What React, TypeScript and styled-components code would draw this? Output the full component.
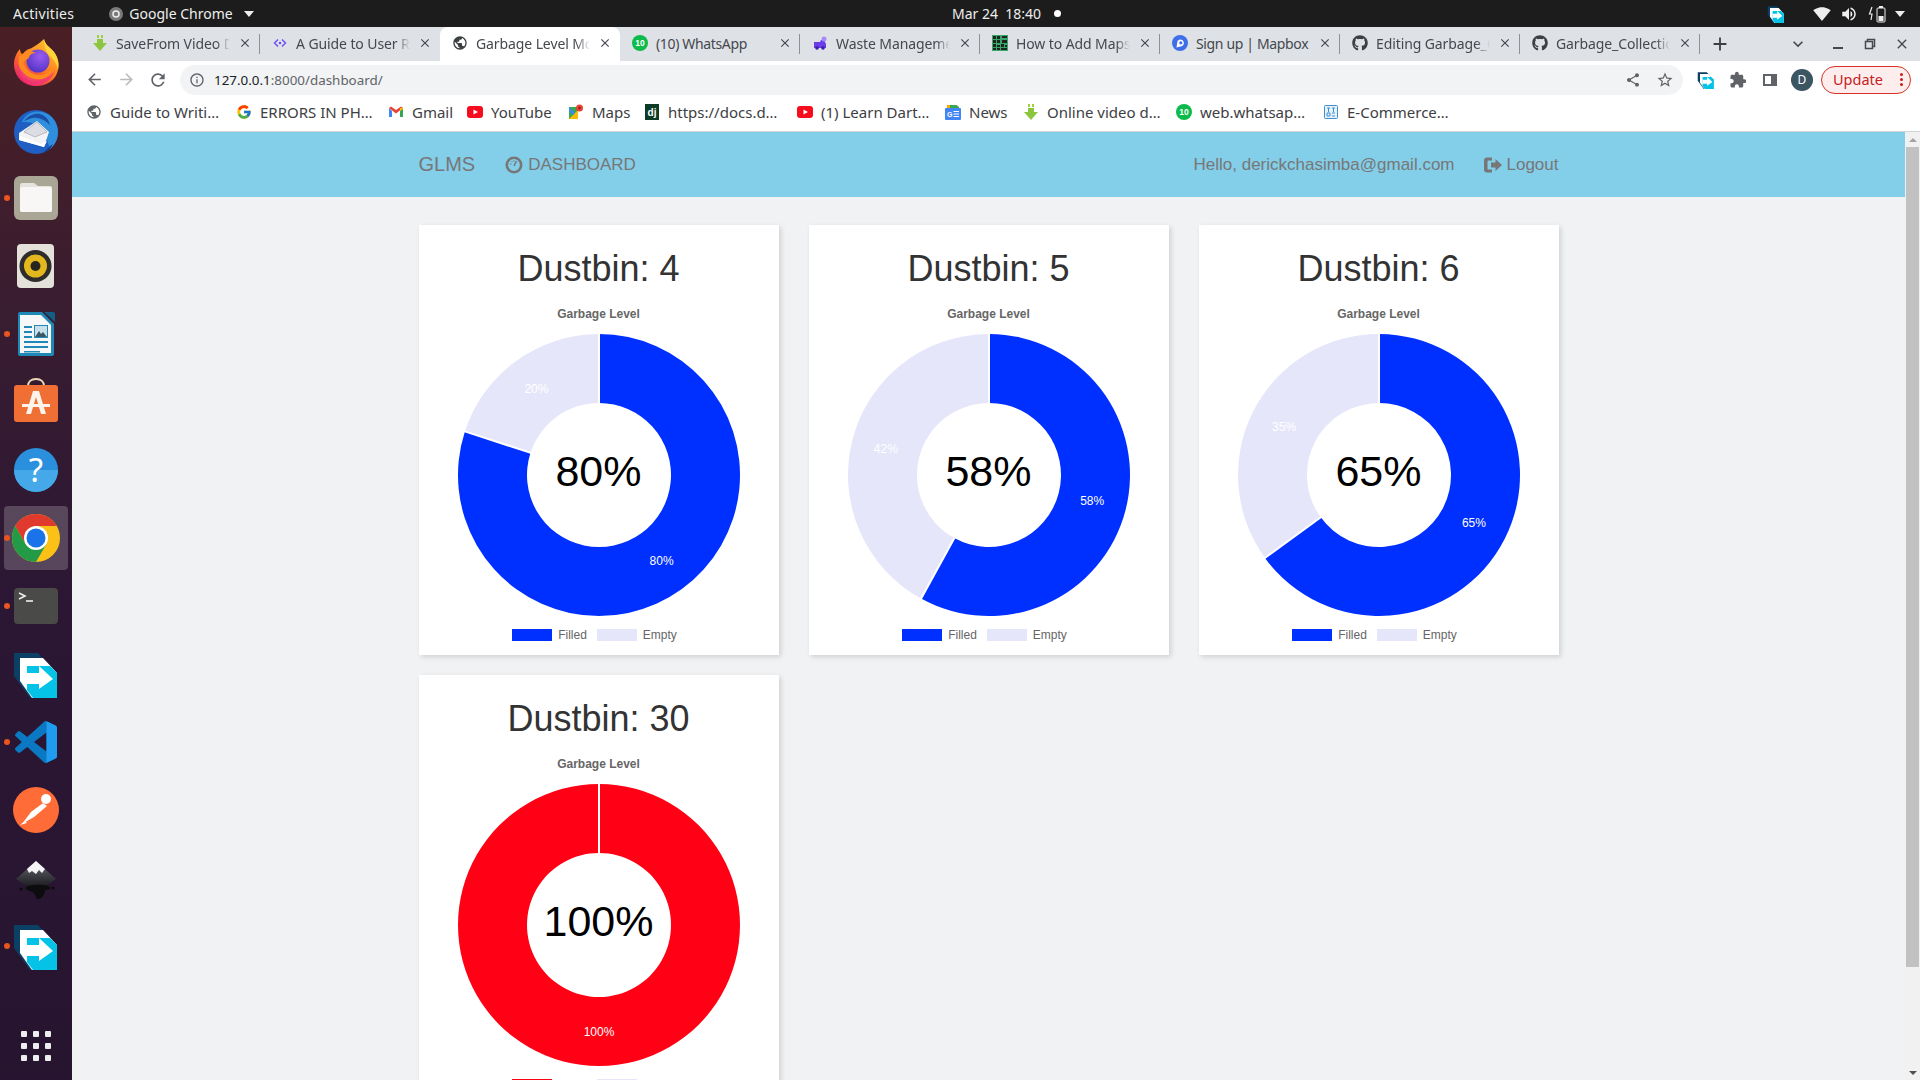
import React, { ReactNode } from 'react'
import styled, { createGlobalStyle } from 'styled-components'
import { FaGithub } from 'react-icons/fa'
import { FcGoogle } from 'react-icons/fc'
import {
  MdAdd,
  MdArrowBack,
  MdArrowForward,
  MdClose,
  MdExtension,
  MdInfoOutline,
  MdKeyboardArrowDown,
  MdPublic,
  MdRefresh,
  MdShare,
  MdSignalWifi4Bar,
  MdStarBorder,
  MdVolumeUp,
} from 'react-icons/md'

const UI_FONT = `"Noto Sans", "Open Sans", sans-serif`
const PAGE_FONT = `"Liberation Sans", Arial, sans-serif`

const GlobalStyle = createGlobalStyle`
  html, body {
    margin: 0;
    height: 100%;
    overflow: hidden;
    background: #1c1c1c;
  }
  #root { height: 100%; }
  * { box-sizing: border-box; }
`

/* ---------- desktop shell ---------- */

const Desktop = styled.div`
  display: flex;
  flex-direction: column;
  width: 1920px;
  height: 1080px;
  overflow: hidden;
`

const TopBar = styled.header`
  display: flex;
  align-items: center;
  flex: none;
  height: 27px;
  background: #1c1c1c;
  color: #eeeeec;
  font-family: ${UI_FONT};
  font-size: 14px;
`

const TopLeft = styled.div`
  display: flex;
  align-items: center;
  flex: none;
  width: 952px;
  padding-left: 13px;
`

const ActivitiesLabel = styled.span`
  letter-spacing: 0.3px;
`

const AppMenu = styled.div`
  display: flex;
  align-items: center;
  margin-left: 35px;
  gap: 6px;
`

const Caret = styled.span`
  width: 0;
  height: 0;
  margin-left: 5px;
  border-left: 5px solid transparent;
  border-right: 5px solid transparent;
  border-top: 6px solid #eeeeec;
`

const TrayCaret = styled(Caret)`
  margin-left: -3px;
`

const Clock = styled.div`
  white-space: pre;
`

const RecordDot = styled.span`
  width: 7px;
  height: 7px;
  margin-left: 13px;
  border-radius: 50%;
  background: #fff;
`

const TopRight = styled.div`
  display: flex;
  align-items: center;
  flex: 1;
  justify-content: flex-end;
  padding-right: 15px;
  gap: 9px;
`

const TrayGap = styled.span`
  width: 10px;
`

const Workspace = styled.div`
  display: flex;
  flex: 1;
  min-height: 0;
`

const Dock = styled.aside`
  display: flex;
  flex-direction: column;
  flex: none;
  width: 72px;
  padding-top: 1px;
  background: linear-gradient(180deg, #4a1f24 0%, #3a1d30 25%, #2b1734 55%, #27142f 100%);
`

const DockItem = styled.div<{ $active?: boolean; $running?: boolean }>`
  position: relative;
  display: flex;
  align-items: center;
  justify-content: center;
  flex: none;
  height: 68px;

  ${(p) =>
    p.$active &&
    `
    &::before {
      content: '';
      position: absolute;
      inset: 2px 4px;
      border-radius: 4px;
      background: rgba(255, 255, 255, 0.2);
    }
  `}

  ${(p) =>
    p.$running &&
    `
    &::after {
      content: '';
      position: absolute;
      left: 4px;
      top: 31px;
      width: 6px;
      height: 6px;
      border-radius: 50%;
      background: #e95420;
    }
  `}

  svg { position: relative; }
`

const AppGrid = styled.div`
  display: grid;
  grid-template-columns: repeat(3, 6px);
  gap: 6px;
  justify-content: center;
  margin-top: auto;
  margin-bottom: 19px;

  span {
    width: 6px;
    height: 6px;
    border-radius: 1px;
    background: #eeeeee;
  }
`

const Browser = styled.main`
  display: flex;
  flex-direction: column;
  flex: 1;
  min-width: 0;
`

/* ---------- chrome tabs ---------- */

const TabStrip = styled.div`
  display: flex;
  align-items: stretch;
  flex: none;
  height: 34px;
  padding-left: 8px;
  background: #dee1e6;
  font-family: ${UI_FONT};
  font-size: 14px;
  color: #45484d;
`

const Tab = styled.div<{ $active?: boolean; $divider?: boolean }>`
  position: relative;
  display: flex;
  align-items: center;
  flex: none;
  width: 180px;
  padding: 0 8px 2px 12px;
  gap: 8px;
  border-radius: 8px 8px 0 0;
  background: ${(p) => (p.$active ? '#fff' : 'transparent')};

  ${(p) =>
    p.$divider &&
    `
    &::after {
      content: '';
      position: absolute;
      right: 0;
      top: 7px;
      bottom: 7px;
      width: 1px;
      background: #8f9194;
    }
  `}
`

const TabIcon = styled.span`
  display: flex;
  flex: none;
  width: 16px;
  height: 16px;
  color: #3c4043;
`

const TabTitle = styled.span<{ $fits?: boolean }>`
  flex: 1;
  min-width: 0;
  overflow: hidden;
  white-space: nowrap;
  letter-spacing: ${(p) => (p.$fits ? '-0.35px' : '-0.1px')};
  ${(p) =>
    !p.$fits &&
    `
    -webkit-mask-image: linear-gradient(90deg, #000 88%, transparent 100%);
    mask-image: linear-gradient(90deg, #000 88%, transparent 100%);
  `}
`

const NewTab = styled.div`
  display: flex;
  align-items: center;
  margin-left: 9px;
  color: #3c4043;
`

const WindowControls = styled.div`
  display: flex;
  align-items: center;
  margin-left: auto;
  padding-right: 2px;
  color: #45484d;
`

const WindowButton = styled.div<{ $width?: number }>`
  display: flex;
  align-items: center;
  justify-content: center;
  width: ${(p) => p.$width ?? 32}px;
  height: 100%;
`

/* ---------- chrome toolbar ---------- */

const Toolbar = styled.div`
  display: flex;
  align-items: center;
  flex: none;
  height: 37px;
  padding: 0 9px 0 6px;
  background: #fff;
  color: #5f6368;
`

const ToolButton = styled.div`
  display: flex;
  align-items: center;
  justify-content: center;
  flex: none;
  width: 32px;
`

const Omnibox = styled.div`
  display: flex;
  align-items: center;
  flex: 1;
  height: 30px;
  margin: 0 7px 0 6px;
  padding-left: 9px;
  border-radius: 15px;
  background: #f1f3f4;
  font-family: ${UI_FONT};
  font-size: 13.4px;
`

const UrlText = styled.span`
  margin-left: 9px;
  color: #5f6368;

  b {
    font-weight: 400;
    color: #202124;
  }
`

const OmniActions = styled.div`
  display: flex;
  margin-left: auto;
  padding-right: 2px;
`

const Avatar = styled.span`
  display: flex;
  align-items: center;
  justify-content: center;
  width: 22px;
  height: 22px;
  border-radius: 50%;
  background: #3c5563;
  color: #fff;
  font-family: ${UI_FONT};
  font-size: 12px;
`

const UpdatePill = styled.div`
  display: flex;
  align-items: center;
  justify-content: space-between;
  width: 90px;
  height: 28px;
  margin-left: 3px;
  padding: 0 7px 1px 11px;
  border: 1px solid #d93025;
  border-radius: 14px;
  background: #fdeeed;
  color: #c5221f;
  font-family: ${UI_FONT};
  font-size: 14.5px;
`

const PillDots = styled.span`
  display: flex;
  flex-direction: column;
  gap: 2px;

  i {
    width: 3px;
    height: 3px;
    border-radius: 50%;
    background: #c5221f;
  }
`

/* ---------- bookmarks ---------- */

const BookmarkBar = styled.div`
  display: flex;
  align-items: center;
  flex: none;
  height: 34px;
  padding: 0 0 6px 14px;
  background: #fff;
  border-bottom: 1px solid #d0d3d8;
  font-family: ${UI_FONT};
  font-size: 15px;
  color: #3c4043;
`

const Bookmark = styled.div<{ $width: number }>`
  display: flex;
  align-items: center;
  flex: none;
  width: ${(p) => p.$width}px;
  gap: 8px;
  white-space: nowrap;
`

/* ---------- dashboard page ---------- */

const Viewport = styled.div`
  display: flex;
  flex: 1;
  min-height: 0;
`

const Page = styled.div`
  flex: 1;
  min-width: 0;
  overflow: hidden;
  background: #f1f2f4;
  font-family: ${PAGE_FONT};
`

const Navbar = styled.nav`
  height: 65px;
  background: #83cee9;
  color: #777;
`

const NavInner = styled.div`
  display: flex;
  align-items: center;
  width: 1140px;
  height: 100%;
  margin: 0 auto;
`

const Brand = styled.span`
  font-size: 20px;
`

const NavLink = styled.span`
  display: flex;
  align-items: center;
  gap: 5px;
  margin-left: 30px;
  font-size: 17px;
`

const NavRight = styled.div`
  display: flex;
  align-items: center;
  margin-left: auto;
  gap: 29px;
  font-size: 17px;
`

const LogoutLink = styled.span`
  display: flex;
  align-items: center;
  gap: 5px;
  font-size: 17px;
`

const CardGrid = styled.div`
  display: grid;
  grid-template-columns: repeat(3, 360px);
  gap: 20px 30px;
  width: 1140px;
  margin: 28px auto 0;
`

const Card = styled.section`
  height: 430px;
  padding-top: 24px;
  background: #fff;
  box-shadow: 2px 2px 5px rgba(0, 0, 0, 0.14);
  text-align: center;
`

const CardTitle = styled.h2`
  margin: 0;
  font-size: 36px;
  font-weight: 400;
  line-height: 40px;
  color: #333;
`

const ChartCaption = styled.div`
  margin-top: 18px;
  font-size: 12px;
  font-weight: 700;
  line-height: 14px;
  color: #666;
`

const DonutWrap = styled.div`
  position: relative;
  width: 282px;
  height: 282px;
  margin: 13px auto 0;

  svg { display: block; }
`

const CenterValue = styled.div`
  position: absolute;
  left: 0;
  right: 0;
  top: 115px;
  font-size: 43px;
  line-height: 44px;
  color: #000;
`

const Legend = styled.div`
  display: flex;
  justify-content: center;
  gap: 10px;
  margin-top: 13px;
  padding-right: 8px;
  font-size: 12px;
  line-height: 12px;
  color: #666;
`

const LegendItem = styled.span`
  display: flex;
  align-items: center;
  gap: 6px;
`

const Swatch = styled.i<{ $color: string }>`
  width: 40px;
  height: 12px;
  background: ${(p) => p.$color};
`

const Scrollbar = styled.div`
  display: flex;
  flex-direction: column;
  align-items: center;
  flex: none;
  width: 15px;
  background: #f1f1f1;
`

const ScrollArrow = styled.span<{ $down?: boolean }>`
  width: 0;
  height: 0;
  margin: 6px 0 5px;
  border-left: 4px solid transparent;
  border-right: 4px solid transparent;
  ${(p) => (p.$down ? 'border-top: 4px solid #505050;' : 'border-bottom: 4px solid #a3a3a3;')}
`

const ScrollThumb = styled.div`
  width: 13px;
  height: 820px;
  background: #c1c1c1;
`

const ScrollTrack = styled.div`
  flex: 1;
`

/* ---------- donut chart ---------- */

const SIZE = 282
const OUTER = 141
const INNER = 72
const EMPTY = '#e6e6fa'

const polar = (r: number, turn: number) => {
  const a = turn * 2 * Math.PI
  return [SIZE / 2 + r * Math.sin(a), SIZE / 2 - r * Math.cos(a)]
}

const slicePath = (from: number, to: number) => {
  const end = Math.min(to, from + 0.99999)
  const large = end - from > 0.5 ? 1 : 0
  const [x1, y1] = polar(OUTER, from)
  const [x2, y2] = polar(OUTER, end)
  const [x3, y3] = polar(INNER, end)
  const [x4, y4] = polar(INNER, from)
  return `M${x1} ${y1}A${OUTER} ${OUTER} 0 ${large} 1 ${x2} ${y2}L${x3} ${y3}A${INNER} ${INNER} 0 ${large} 0 ${x4} ${y4}Z`
}

const Spoke = ({ turn }: { turn: number }) => {
  const [x1, y1] = polar(INNER - 1, turn)
  const [x2, y2] = polar(OUTER + 1, turn)
  return <line x1={x1} y1={y1} x2={x2} y2={y2} stroke="#fff" strokeWidth="2" />
}

const Donut = ({ value, color }: { value: number; color: string }) => {
  const split = value / 100
  const mid = (OUTER + INNER) / 2
  const [fx, fy] = polar(mid, split / 2)
  const [ex, ey] = polar(mid, split + (1 - split) / 2)
  return (
    <svg width={SIZE} height={SIZE} viewBox={`0 0 ${SIZE} ${SIZE}`}>
      <path d={slicePath(0, split)} fill={color} />
      {value < 100 && <path d={slicePath(split, 1)} fill={EMPTY} />}
      <Spoke turn={0} />
      {value < 100 && <Spoke turn={split} />}
      <text x={fx} y={fy} fill="#fff" fontSize="12" textAnchor="middle" dominantBaseline="central">
        {value}%
      </text>
      {value < 100 && (
        <text x={ex} y={ey} fill="#fff" fontSize="12" textAnchor="middle" dominantBaseline="central">
          {100 - value}%
        </text>
      )}
    </svg>
  )
}

const bins = [
  { id: 4, level: 80, color: '#0030ff' },
  { id: 5, level: 58, color: '#0030ff' },
  { id: 6, level: 65, color: '#0030ff' },
  { id: 30, level: 100, color: '#ff0014' },
]

/* ---------- small icons ---------- */

const DownloadFav = () => (
  <svg width="16" height="16" viewBox="0 0 16 16">
    <path d="M5 0h2v3H5zM9 0h2v3H9z" fill="#a4cf3c" />
    <path d="M5 4h6v4h4l-7 8-7-8h4z" fill="#8cc63f" />
  </svg>
)

const CodeFav = () => (
  <svg width="16" height="16" viewBox="0 0 16 16" fill="none" stroke="#6a4df4" strokeWidth="1.4">
    <path d="M6 4.500 2.500 8 6 11.500M10 4.500 13.500 8 10 11.500" />
    <circle cx="8" cy="8" r=".6" fill="#6a4df4" />
  </svg>
)

const WhatsAppBadge = () => (
  <svg width="16" height="16" viewBox="0 0 16 16">
    <circle cx="8" cy="8" r="8" fill="#0dba4c" />
    <text x="8" y="11" fontSize="8.500" fontFamily={PAGE_FONT} fontWeight="700" fill="#fff" textAnchor="middle">
      10
    </text>
  </svg>
)

const TruckFav = () => (
  <svg width="16" height="16" viewBox="0 0 16 16">
    <path d="M2 7h6l1-2h3l2 4v4H2z" fill="#6a3de8" />
    <circle cx="12" cy="4" r="2.500" fill="#a78bfa" />
    <circle cx="5" cy="13" r="1.800" fill="#3b1fa8" />
    <circle cx="11" cy="13" r="1.800" fill="#3b1fa8" />
  </svg>
)

const GridFav = () => (
  <svg width="16" height="16" viewBox="0 0 16 16">
    <rect width="16" height="16" fill="#37a86b" />
    <path d="M1 1h3v3H1zM5 1h3v3H5zM10 1h5v2h-5zM1 5h3v3H1zM5 5h3v3H5zM10 5h5v3h-5zM1 9h3v3H1zM5 10h3v2H5zM9 9h3v3H9zM13 10h2v2h-2zM1 13h3v2H1zM5 13h3v2H5zM9 13h6v2H9z" fill="#222" />
  </svg>
)

const MapboxFav = () => (
  <svg width="16" height="16" viewBox="0 0 16 16">
    <circle cx="8" cy="8" r="8" fill="#3f6fe8" />
    <path d="M4.500 12.500 5.500 6a3.500 3.500 0 1 1 3 5.500z" fill="#fff" />
    <circle cx="8.800" cy="7.800" r="1.600" fill="#3f6fe8" />
  </svg>
)

const YouTubeFav = () => (
  <svg width="16" height="16" viewBox="0 0 16 16">
    <rect y="2" width="16" height="12" rx="3" fill="#f50d1e" />
    <path d="M6.500 5.500 11 8l-4.500 2.500z" fill="#fff" />
  </svg>
)

const GmailFav = () => (
  <svg width="16" height="16" viewBox="0 0 16 16">
    <path d="M1 4v9h3V7z" fill="#4285f4" />
    <path d="M15 4v9h-3V7z" fill="#34a853" />
    <path d="M1 4l7 5.500L15 4 13 2.500 8 6 3 2.500z" fill="#ea4335" />
    <path d="M12 4v3l3-2V3.500z" fill="#fbbc04" />
  </svg>
)

const MapsFav = () => (
  <svg width="16" height="16" viewBox="0 0 16 16">
    <path d="M1 3h9v12H1z" fill="#34a853" />
    <path d="M1 15 10 6v9z" fill="#fbbc04" />
    <path d="M1 3l6 6-2 2-4-4z" fill="#4285f4" />
    <circle cx="11.500" cy="4" r="3.500" fill="#ea4335" />
    <circle cx="11.500" cy="4" r="1.200" fill="#8c1d18" />
  </svg>
)

const DjangoFav = () => (
  <svg width="16" height="16" viewBox="0 0 16 16">
    <rect x="1" width="14" height="16" fill="#0c3c26" />
    <text x="8" y="12" fontSize="10" fontFamily={PAGE_FONT} fontWeight="700" fill="#fff" textAnchor="middle">
      dj
    </text>
  </svg>
)

const NewsFav = () => (
  <svg width="16" height="16" viewBox="0 0 16 16">
    <path d="M2 1h10l2 3H2z" fill="#f9ab00" />
    <path d="M5 1h6l3 2v2H5z" fill="#34a853" />
    <rect y="4" width="16" height="12" rx="1" fill="#4285f4" />
    <text x="2" y="13" fontSize="7" fontFamily={PAGE_FONT} fontWeight="700" fill="#fff">
      G
    </text>
    <path d="M8.500 7.500H14M8.500 10H14M8.500 12.500H14" stroke="#fff" />
  </svg>
)

const CommerceFav = () => (
  <svg width="16" height="16" viewBox="0 0 16 16" fill="none" stroke="#3f8fd0">
    <rect x="1.500" y="1.500" width="13" height="13" rx="1" fill="#e8f2fb" />
    <path d="M4 4h3M9 4h3M5.500 4v4M10.500 4v4M4 9h3v3H4zM9 9h3M9 12h3" />
  </svg>
)

const SidePanelIcon = () => (
  <svg width="16" height="16" viewBox="0 0 16 16">
    <path d="M1 2h14v12H1z" fill="#5f6368" />
    <path d="M3 4h6v8H3z" fill="#fff" />
  </svg>
)

const TransferShape = () => (
  <>
    <path d="M2 3h24l19 20v25H18L2 26z" fill="#0b3f63" />
    <path d="M8 8h23l14 15v25H20L8 31z" fill="#fff" />
    <path d="M15 16h23l7 7v25H21l-6-8z" fill="#05c3e6" />
    <path d="M15 23h12v-7l14 13-14 10v-5H15z" fill="#fff" />
  </>
)

const TransferMini = () => (
  <svg width="18" height="18" viewBox="0 0 48 48">
    <TransferShape />
  </svg>
)

const DashboardGlyph = () => (
  <svg width="18" height="18" viewBox="0 0 18 18">
    <circle cx="9" cy="9" r="7.200" fill="none" stroke="#777" strokeWidth="2.600" />
    <path d="M9 10 11.500 5" stroke="#777" strokeWidth="1.500" />
    <path d="M5 8h1.500M6.500 5.500h1M9 4.500v1" stroke="#777" strokeWidth="1.200" />
  </svg>
)

const LogoutGlyph = () => (
  <svg width="18" height="18" viewBox="0 0 18 18" fill="#777">
    <path d="M0 4.500A3 3 0 0 1 3 1.500h5v3H4.500a1 1 0 0 0-1 1v7a1 1 0 0 0 1 1H8v3H3a3 3 0 0 1-3-3z" />
    <path d="M7 6.500h4.500V3L18 9l-6.500 6v-3.500H7z" />
  </svg>
)

const BatteryIcon = () => (
  <svg width="22" height="18" viewBox="0 0 22 18" fill="none">
    <path d="M5 2 2.500 9H5l-1 6" stroke="#eee" strokeWidth="1.200" />
    <rect x="10" y="3" width="8" height="14" rx="1" stroke="#eee" />
    <rect x="12" y="1" width="4" height="2" fill="#eee" />
    <rect x="11.500" y="11" width="5" height="5" fill="#eee" />
  </svg>
)

/* ---------- dock icons (48 x 48) ---------- */

const Icon48 = ({ children }: { children: ReactNode }) => (
  <svg width="48" height="48" viewBox="0 0 48 48">
    {children}
  </svg>
)

const FirefoxIcon = () => (
  <Icon48>
    <defs>
      <linearGradient id="ffBody" x1="0.800" y1="0.100" x2="0.200" y2="1">
        <stop offset="0" stopColor="#ffbd2e" />
        <stop offset=".5" stopColor="#ff7a1f" />
        <stop offset="1" stopColor="#e6156f" />
      </linearGradient>
      <radialGradient id="ffCore" cx=".6" cy=".3" r=".8">
        <stop offset="0" stopColor="#9a5cf0" />
        <stop offset="1" stopColor="#4a2fc0" />
      </radialGradient>
    </defs>
    <path d="M32 1c1 6 6 8 10 13 5 7 5 13 4 18-2 10-11 16-22 16C11 48 2 38 2 26 2 20 5 14 8 11c0 3 1 4 3 6 1-4 5-6 9-7-1 0 6-3 12-9z" fill="url(#ffBody)" />
    <path d="M32 1c1 6 6 8 10 13 5 7 5 13 4 18-1-7-5-11-9-15-3-3-5-9-5-16z" fill="#ffd43a" />
    <circle cx="26" cy="23" r="11.500" fill="url(#ffCore)" />
    <path d="M7 19c4-5 10-7 17-4-5 0-7 3-7 5l-5 3c0 8 8 15 17 14 5-1 10-4 12-8-2 9-11 15-20 14C12 42 5 33 7 19z" fill="#ff8a1f" />
    <path d="M6 26c4 11 14 17 24 15 6-1 11-5 13-9-3 10-11 15-20 15C13 47 5 38 6 26z" fill="#f0347a" opacity=".8" />
  </Icon48>
)

const ThunderbirdIcon = () => (
  <Icon48>
    <g transform="translate(0 1)">
      <circle cx="24" cy="25" r="22" fill="#1f5fc4" />
      <path d="M10 15c3-8 12-12 20-10 9 2 16 10 16 20 0 7-3 13-8 17-3-9-5-20-15-25-5-2-9-2-13-2z" fill="#2f8fdc" />
      <path d="M12 14c5-6 11-8 16-7 6 2 9 6 10 11-5-5-11-8-18-7z" fill="#1a4fa8" />
      <path d="M7 26 25 14l12 11-5 15-25-7z" fill="#f3f3f5" />
      <path d="M12 25 25 15l10 10-12 5z" fill="#dcdde2" stroke="#9a9ca4" strokeWidth=".6" />
      <path d="M7 33l25 7 3-6-6 3-21-8z" fill="#fff" />
      <path d="M31 46c3-1 8-4 10-9l-3 2z" fill="#123e8a" />
    </g>
  </Icon48>
)

const FilesIcon = () => (
  <Icon48>
    <rect x="2" y="2" width="44" height="44" rx="6" fill="#aaa695" />
    <path d="M8 11a2 2 0 0 1 2-2h12l4 3h12a2 2 0 0 1 2 2v22a2 2 0 0 1-2 2H10a2 2 0 0 1-2-2z" fill="#e6e3dc" />
    <path d="M8 15a2 2 0 0 1 2-2h28a2 2 0 0 1 2 2v21a2 2 0 0 1-2 2H10a2 2 0 0 1-2-2z" fill="#f8f7f5" />
  </Icon48>
)

const RhythmboxIcon = () => (
  <Icon48>
    <rect x="5" y="2" width="37" height="44" rx="4" fill="#e4e1da" />
    <circle cx="23.500" cy="24" r="16" fill="#2e2d2b" />
    <circle cx="23.500" cy="24" r="11.500" fill="#e3b81f" />
    <circle cx="23.500" cy="24" r="5" fill="#26251f" />
  </Icon48>
)

const WriterIcon = () => (
  <Icon48>
    <path d="M6 4a2 2 0 0 1 2-2h22l12 12v30a2 2 0 0 1-2 2H8a2 2 0 0 1-2-2z" fill="#1e88b6" />
    <path d="M8 5h21l10 10v28H8z" fill="#f5f7f8" />
    <path d="M32 2h9a2 2 0 0 1 2 2v8z" fill="#135f86" />
    <path d="M12 16h8v2h-8zM12 21h8v2h-8zM12 26h8v2h-8zM12 31h24v2H12zM12 36h24v2H12zM12 41h16v1.500H12z" fill="#1e88b6" />
    <rect x="22" y="15" width="14" height="13" fill="#1e88b6" />
    <path d="M23 16h12v11H23z" fill="#c9dfea" />
    <path d="M23 27l4-6 2 3 2-2 4 5z" fill="#3d5665" />
  </Icon48>
)

const StoreIcon = () => (
  <Icon48>
    <path d="M16 8c0-4 3-7 8-7s8 3 8 7" fill="none" stroke="#eed9b5" strokeWidth="2" />
    <path d="M2 10a3 3 0 0 1 3-3h38a3 3 0 0 1 3 3v31a3 3 0 0 1-3 3H5a3 3 0 0 1-3-3z" fill="#ef6f34" />
    <path d="M21 13h6l7 23h-5l-5-17-5 17h-5z" fill="#fdf3ea" />
    <path d="M10 26h28v3H10z" fill="#fdf3ea" />
  </Icon48>
)

const HelpIcon = () => (
  <Icon48>
    <circle cx="24" cy="24" r="22" fill="#2a8fdc" />
    <path d="M2 24a22 22 0 0 0 44 0z" fill="#45a8e8" />
    <text x="24" y="36" fontSize="33" fontFamily={UI_FONT} fill="#fff" textAnchor="middle">
      ?
    </text>
  </Icon48>
)

const ChromeIcon = () => (
  <Icon48>
    <defs>
      <clipPath id="chromeClip">
        <circle cx="24" cy="24" r="24" />
      </clipPath>
    </defs>
    <g clipPath="url(#chromeClip)">
      <rect width="48" height="48" fill="#fbc116" />
      <polygon points="24,24 24,12 60,12 60,-20 -15.300,-20 13.600,30" fill="#e0392d" />
      <polygon points="24,24 13.600,30 -15.300,-20 -40,-20 -40,70 13,67 34.400,30" fill="#229a46" />
    </g>
    <circle cx="24" cy="24" r="12" fill="#fff" />
    <circle cx="24" cy="24" r="9.500" fill="#1a73e8" />
  </Icon48>
)

const TerminalIcon = () => (
  <Icon48>
    <rect x="2" y="6" width="44" height="36" rx="4" fill="#4a4a48" />
    <path d="M7 11l6 3-6 3" fill="none" stroke="#eee" strokeWidth="1.600" />
    <path d="M14 19h7" stroke="#eee" strokeWidth="1.600" />
  </Icon48>
)

const VsCodeIcon = () => (
  <Icon48>
    <g transform="translate(3 3) scale(.42)">
      <path
        d="M96.500 10.800 75.900.9a6.200 6.200 0 0 0-7.100 1.200L29.300 38 12.200 25a4.200 4.200 0 0 0-5.300.2L1.400 30.200a4.200 4.200 0 0 0 0 6.200L16.300 50 1.400 63.600a4.200 4.200 0 0 0 0 6.200l5.500 5a4.200 4.200 0 0 0 5.300.2L29.300 62l39.500 36a6.200 6.200 0 0 0 7.100 1.200l20.600-9.900a6.200 6.200 0 0 0 3.500-5.600V16.400a6.200 6.200 0 0 0-3.500-5.600zM75 72.700 45.100 50 75 27.300z"
        fill="#0a78c2"
      />
      <path d="M75 .6l21.500 10.200a6.200 6.200 0 0 1 3.500 5.600v67.300a6.200 6.200 0 0 1-3.500 5.600L75 99.700z" fill="#1f9cf0" />
    </g>
  </Icon48>
)

const PostmanIcon = () => (
  <Icon48>
    <circle cx="24" cy="24" r="23" fill="#ff6c37" />
    <circle cx="34" cy="13" r="5" fill="#fff" />
    <path d="M31 17 19 26 10 38l12-7 13-11z" fill="#fff" />
    <path d="M8 39l5-4 2 2z" fill="#fff" />
  </Icon48>
)

const InkscapeIcon = () => (
  <Icon48>
    <defs>
      <linearGradient id="inkBody" x1="0" y1="0" x2="0" y2="1">
        <stop offset="0" stopColor="#6a6a74" />
        <stop offset="1" stopColor="#141418" />
      </linearGradient>
    </defs>
    <path d="M24 7 44 25 30 35H18L4 25z" fill="url(#inkBody)" />
    <path d="M24 7l9 8-3 4-3-3-3 4-4-3-3 2-2-4z" fill="#f4f4f4" />
    <path d="M14 33c6-3 20-3 24 0 2 2-2 3-5 3 0 5-4 9-7 9-3 0-2-6-6-7-3-1-8-3-6-5z" fill="#0c0c0e" />
    <circle cx="9" cy="35" r="1.500" fill="#0c0c0e" />
    <circle cx="41" cy="34" r="1.500" fill="#0c0c0e" />
  </Icon48>
)

const dockApps = [
  { key: 'firefox', icon: <FirefoxIcon /> },
  { key: 'thunderbird', icon: <ThunderbirdIcon /> },
  { key: 'files', icon: <FilesIcon />, running: true },
  { key: 'rhythmbox', icon: <RhythmboxIcon /> },
  { key: 'writer', icon: <WriterIcon />, running: true },
  { key: 'store', icon: <StoreIcon /> },
  { key: 'help', icon: <HelpIcon /> },
  { key: 'chrome', icon: <ChromeIcon />, running: true, active: true },
  { key: 'terminal', icon: <TerminalIcon />, running: true },
  { key: 'transfer', icon: <Icon48><TransferShape /></Icon48> },
  { key: 'vscode', icon: <VsCodeIcon />, running: true },
  { key: 'postman', icon: <PostmanIcon /> },
  { key: 'inkscape', icon: <InkscapeIcon /> },
  { key: 'transfer2', icon: <Icon48><TransferShape /></Icon48>, running: true },
]

const tabs = [
  { title: 'SaveFrom Video Downloader', icon: <DownloadFav />, divider: true },
  { title: 'A Guide to User Registration', icon: <CodeFav /> },
  { title: 'Garbage Level Monitoring', icon: <MdPublic size={16} />, active: true },
  { title: '(10) WhatsApp', icon: <WhatsAppBadge />, divider: true, fits: true },
  { title: 'Waste Management System', icon: <TruckFav />, divider: true },
  { title: 'How to Add Maps to', icon: <GridFav />, divider: true },
  { title: 'Sign up | Mapbox', icon: <MapboxFav />, divider: true, fits: true },
  { title: 'Editing Garbage_Collection', icon: <FaGithub size={16} />, divider: true },
  { title: 'Garbage_Collection_System', icon: <FaGithub size={16} />, divider: true },
]

const bookmarks = [
  { label: 'Guide to Writi…', width: 150, icon: <MdPublic size={16} color="#5f6368" /> },
  { label: 'ERRORS IN PH…', width: 152, icon: <FcGoogle size={16} /> },
  { label: 'Gmail', width: 79, icon: <GmailFav /> },
  { label: 'YouTube', width: 101, icon: <YouTubeFav /> },
  { label: 'Maps', width: 76, icon: <MapsFav /> },
  { label: 'https://docs.d…', width: 153, icon: <DjangoFav /> },
  { label: '(1) Learn Dart…', width: 148, icon: <YouTubeFav /> },
  { label: 'News', width: 78, icon: <NewsFav /> },
  { label: 'Online video d…', width: 153, icon: <DownloadFav /> },
  { label: 'web.whatsap…', width: 147, icon: <WhatsAppBadge /> },
  { label: 'E-Commerce…', width: 133, icon: <CommerceFav /> },
]

const App = () => (
  <>
    <GlobalStyle />
    <Desktop>
      <TopBar>
        <TopLeft>
          <ActivitiesLabel>Activities</ActivitiesLabel>
          <AppMenu>
            <svg width="14" height="14" viewBox="0 0 14 14">
              <circle cx="7" cy="7" r="7" fill="#7a7a7a" />
              <circle cx="7" cy="7" r="3" fill="none" stroke="#eee" strokeWidth="1.500" />
            </svg>
            Google Chrome
            <Caret />
          </AppMenu>
        </TopLeft>
        <Clock>Mar 24  18:40</Clock>
        <RecordDot />
        <TopRight>
          <TransferMini />
          <TrayGap />
          <MdSignalWifi4Bar size={18} color="#eee" />
          <MdVolumeUp size={18} color="#eee" />
          <BatteryIcon />
          <TrayCaret />
        </TopRight>
      </TopBar>
      <Workspace>
        <Dock>
          {dockApps.map((app) => (
            <DockItem key={app.key} $running={app.running} $active={app.active}>
              {app.icon}
            </DockItem>
          ))}
          <AppGrid>
            {Array.from({ length: 9 }, (_, i) => (
              <span key={i} />
            ))}
          </AppGrid>
        </Dock>
        <Browser>
          <TabStrip>
            {tabs.map((tab) => (
              <Tab key={tab.title} $active={tab.active} $divider={tab.divider}>
                <TabIcon>{tab.icon}</TabIcon>
                <TabTitle $fits={tab.fits}>{tab.title}</TabTitle>
                <MdClose size={14} />
              </Tab>
            ))}
            <NewTab>
              <MdAdd size={22} />
            </NewTab>
            <WindowControls>
              <WindowButton $width={48}>
                <MdKeyboardArrowDown size={20} />
              </WindowButton>
              <WindowButton>
                <svg width="12" height="12" viewBox="0 0 12 12">
                  <rect x="1" y="9" width="10" height="2" fill="#45484d" />
                </svg>
              </WindowButton>
              <WindowButton>
                <svg width="12" height="12" viewBox="0 0 12 12" fill="none" stroke="#45484d" strokeWidth="1.500">
                  <path d="M3.500 3V1.500h7v7H9" />
                  <rect x="1.500" y="3.500" width="7" height="7" />
                </svg>
              </WindowButton>
              <WindowButton>
                <MdClose size={16} />
              </WindowButton>
            </WindowControls>
          </TabStrip>
          <Toolbar>
            <ToolButton>
              <MdArrowBack size={19} color="#5f6368" />
            </ToolButton>
            <ToolButton>
              <MdArrowForward size={19} color="#b8babd" />
            </ToolButton>
            <ToolButton>
              <MdRefresh size={20} color="#5f6368" />
            </ToolButton>
            <Omnibox>
              <MdInfoOutline size={16} />
              <UrlText>
                <b>127.0.0.1</b>:8000/dashboard/
              </UrlText>
              <OmniActions>
                <ToolButton>
                  <MdShare size={16} />
                </ToolButton>
                <ToolButton>
                  <MdStarBorder size={18} />
                </ToolButton>
              </OmniActions>
            </Omnibox>
            <ToolButton>
              <TransferMini />
            </ToolButton>
            <ToolButton>
              <MdExtension size={18} />
            </ToolButton>
            <ToolButton>
              <SidePanelIcon />
            </ToolButton>
            <ToolButton>
              <Avatar>D</Avatar>
            </ToolButton>
            <UpdatePill>
              Update
              <PillDots>
                <i />
                <i />
                <i />
              </PillDots>
            </UpdatePill>
          </Toolbar>
          <BookmarkBar>
            {bookmarks.map((b) => (
              <Bookmark key={b.label} $width={b.width}>
                {b.icon}
                {b.label}
              </Bookmark>
            ))}
          </BookmarkBar>
          <Viewport>
            <Page>
              <Navbar>
                <NavInner>
                  <Brand>GLMS</Brand>
                  <NavLink>
                    <DashboardGlyph />
                    DASHBOARD
                  </NavLink>
                  <NavRight>
                    <span>Hello, derickchasimba@gmail.com</span>
                    <LogoutLink>
                      <LogoutGlyph />
                      Logout
                    </LogoutLink>
                  </NavRight>
                </NavInner>
              </Navbar>
              <CardGrid>
                {bins.map((bin) => (
                  <Card key={bin.id}>
                    <CardTitle>Dustbin: {bin.id}</CardTitle>
                    <ChartCaption>Garbage Level</ChartCaption>
                    <DonutWrap>
                      <Donut value={bin.level} color={bin.color} />
                      <CenterValue>{bin.level}%</CenterValue>
                    </DonutWrap>
                    <Legend>
                      <LegendItem>
                        <Swatch $color={bin.color} />
                        Filled
                      </LegendItem>
                      <LegendItem>
                        <Swatch $color={EMPTY} />
                        Empty
                      </LegendItem>
                    </Legend>
                  </Card>
                ))}
              </CardGrid>
            </Page>
            <Scrollbar>
              <ScrollArrow />
              <ScrollThumb />
              <ScrollTrack />
              <ScrollArrow $down />
            </Scrollbar>
          </Viewport>
        </Browser>
      </Workspace>
    </Desktop>
  </>
)

export default App
